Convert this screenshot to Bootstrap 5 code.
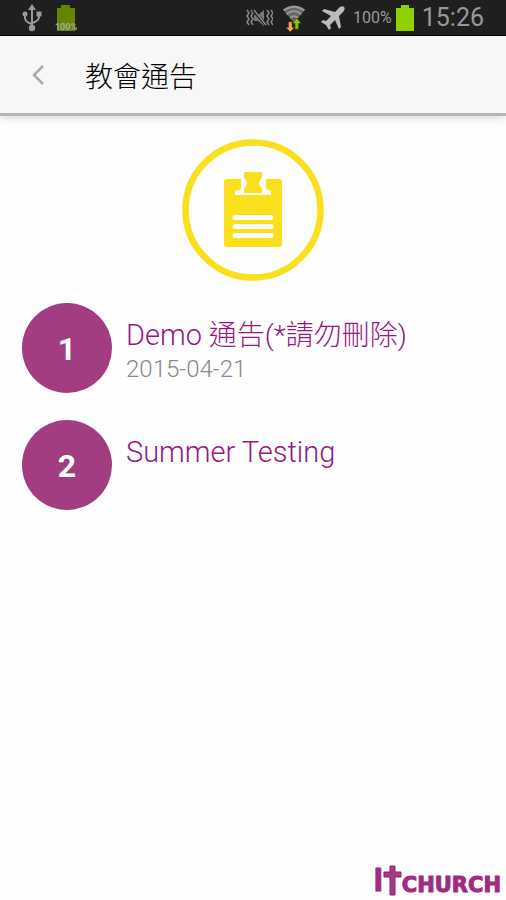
<!DOCTYPE html>
<html lang="zh-Hant">
<head>
<meta charset="utf-8">
<meta name="viewport" content="width=device-width, initial-scale=1">
<title>教會通告</title>
<link href="https://cdn.jsdelivr.net/npm/bootstrap@5.3.0/dist/css/bootstrap.min.css" rel="stylesheet">
<style>
body { font-family: Roboto, "Noto Sans CJK TC", sans-serif; background: #fefefe; }
.status-bar { height: 36px; background: #1f1f1f; border-bottom: 1px solid #000; color: #999; padding: 0 22px; }
.status-bar svg { flex: none; }
.status-plane { margin-left: 14px; }
.status-percent { font-size: 16px; line-height: 36px; }
.status-clock { font-size: 25px; line-height: 36px; }
.title-bar { height: 80px; background: #f7f7f7; border-bottom: 3px solid #b6b6b6; box-shadow: 0 2px 8px rgba(0,0,0,.15); padding-left: 26px; }
.title-bar h1 { font-size: 28px; line-height: 36px; font-weight: 300; color: #000; padding: 6px 0 0 11px; }
.back-btn { width: 24px; height: 32px; }
.crest { padding: 23px 0 22px; }
.notice-list { gap: 27px; padding: 0 22px; }
.notice { gap: 14px; color: #98177f; }
.notice:hover { color: #98177f; }
.notice-number { width: 90px; height: 90px; background: #a33d82; font-size: 32px; line-height: 40px; padding-top: 2px; }
.notice-title { font-size: 28px; line-height: 36px; font-weight: 300; padding-top: 14px; }
.notice-title span { font-size: 29px; }
.notice-date { font-size: 24px; line-height: 30px; font-weight: 300; color: #888; }
.brand { color: #a02b80; font-family: "Liberation Sans", Arial, sans-serif; font-weight: 700; padding: 0 5px 4px; }
.brand-initial { font-size: 33px; line-height: 32px; -webkit-text-stroke: 1px #a02b80; }
.brand-name { font-family: "DejaVu Sans", Verdana, sans-serif; font-size: 21px; line-height: 22px; -webkit-text-stroke: 1px #a02b80; }
</style>
<script src="https://cdn.jsdelivr.net/npm/bootstrap@5.3.0/dist/js/bootstrap.bundle.min.js"></script>
</head>
<body class="d-flex flex-column min-vh-100">
<div class="status-bar d-flex align-items-center">
  <svg width="20" height="28" viewBox="0 0 20 28" fill="none" stroke="#999" stroke-width="2" aria-hidden="true"><path d="M10 4v20M3 10v4q0 4 7 6M17 10v3q0 4-7 6"/><path d="M10 0l4 6H6z" fill="#999" stroke="none"/><circle cx="3" cy="10" r="2.500" fill="#999" stroke="none"/><path d="M14.500 7.500h5v5h-5z" fill="#999" stroke="none"/><circle cx="10" cy="24" r="3.200" fill="#999" stroke="none"/></svg>
  <svg class="ms-2 ps-1" width="28" height="28" viewBox="0 0 24 28" aria-hidden="true"><path d="M3 4h4V1h9v3h5v23H3z" fill="#658400"/><text x="12" y="26" text-anchor="middle" font-size="9" font-weight="700" fill="#aaa">100%</text></svg>
  <svg class="ms-auto" width="28" height="22" viewBox="0 0 28 22" fill="none" stroke="#888" stroke-width="1.500" aria-hidden="true"><path d="M2 3l2 3-2 3 2 3-2 3 2 3M6 3l2 3-2 3 2 3-2 3 2 3M22 3l2 3-2 3 2 3-2 3 2 3M26 3l2 3-2 3 2 3-2 3 2 3"/><path d="M9 8h4l6-5v16l-6-5H9z" fill="#777" stroke="none"/><path d="M8 3l13 15" stroke="#1f1f1f" stroke-width="3"/><path d="M9 3l12 15"/></svg>
  <svg class="ms-2" width="26" height="28" viewBox="0 0 24 30" aria-hidden="true"><path d="M0 6Q12-3 24 6L12 20z" fill="#666"/><path d="M1 7Q12-1 23 7M4 11Q12 4 20 11M8 15Q12 11 16 15" fill="none" stroke="#999" stroke-width="2"/><path d="M6 19h4v6h3l-5 5-5-5h3z" fill="#ffa43b" stroke="#1f1f1f" stroke-width=".6"/><path d="M13 27v-6h-3l5-6 5 6h-3v6z" fill="#8cc500" stroke="#1f1f1f" stroke-width=".6"/></svg>
  <svg class="status-plane" width="24" height="24" viewBox="0 0 24 24" fill="#bbb" aria-hidden="true"><path d="M23 1c-1.500-1.500-4 0-5 1l-4 4L3 3 1 5l9 5-5 5-3-1-2 2 5 3 3 5 2-2-1-3 5-5 4 9 2-2-2-11 4-4c1-1 2.500-3.500 1-5z"/></svg>
  <span class="status-percent ms-2">100%</span>
  <svg class="ms-1" width="18" height="26" viewBox="0 0 18 26" aria-hidden="true"><path d="M0 3h5V0h8v3h5v23H0z" fill="#8fd000"/></svg>
  <span class="status-clock ms-2">15:26</span>
</div>
<header class="title-bar d-flex align-items-center">
  <button type="button" class="back-btn btn p-0 border-0 d-flex align-items-center justify-content-center" aria-label="返回"><svg width="12" height="20" viewBox="0 0 12 20" fill="none" stroke="#aaa" stroke-width="2.500"><path d="M11 1L2 10l9 9"/></svg></button>
  <h1 class="mb-0 ms-4">教會通告</h1>
</header>
<main class="flex-grow-1">
  <div class="crest">
    <svg class="d-block mx-auto" width="142" height="142" viewBox="0 0 142 142" aria-hidden="true"><circle cx="71" cy="71" r="67.500" fill="none" stroke="#f9df1c" stroke-width="6.500"/><path d="M45 40h14v9q0 2-3 2-3 0-3 2v3h36v-3q0-2-3-2-2 0-2-2v-9h13q3 0 3 3v62q0 3-3 3H45q-3 0-3-3V43q0-3 3-3z" fill="#f9df1c"/><path d="M62 33h18v6q-3 2-3 5t3 5v5H62v-5q3-2 3-5t-3-5z" fill="#f9df1c"/><path d="M53 78.500h36M53 87.500h36M53 96.500h36" fill="none" stroke="#fff" stroke-width="5" stroke-linecap="round"/></svg>
  </div>
  <div class="notice-list d-flex flex-column">
    <a href="#notice-1" id="notice-1" class="notice d-flex text-decoration-none">
      <span class="notice-number rounded-circle flex-shrink-0 d-flex align-items-center justify-content-center text-white fw-bold">1</span>
      <span class="d-flex flex-column"><span class="notice-title"><span>Demo</span> 通告(*請勿刪除)</span><time class="notice-date" datetime="2015-04-21">2015-04-21</time></span>
    </a>
    <a href="#notice-2" id="notice-2" class="notice d-flex text-decoration-none">
      <span class="notice-number rounded-circle flex-shrink-0 d-flex align-items-center justify-content-center text-white fw-bold">2</span>
      <span class="notice-title"><span>Summer Testing</span></span>
    </a>
  </div>
</main>
<footer class="brand d-flex justify-content-end align-items-end">
  <span class="brand-initial">I</span>
  <svg width="19" height="31" viewBox="0 0 19 31" fill="#a33d82" stroke="#98177f" aria-hidden="true"><path d="M7 1h5v6h6v5h-6v18H7V12H1V7h6z"/></svg>
  <span class="brand-name">CHURCH</span>
</footer>
</body>
</html>
